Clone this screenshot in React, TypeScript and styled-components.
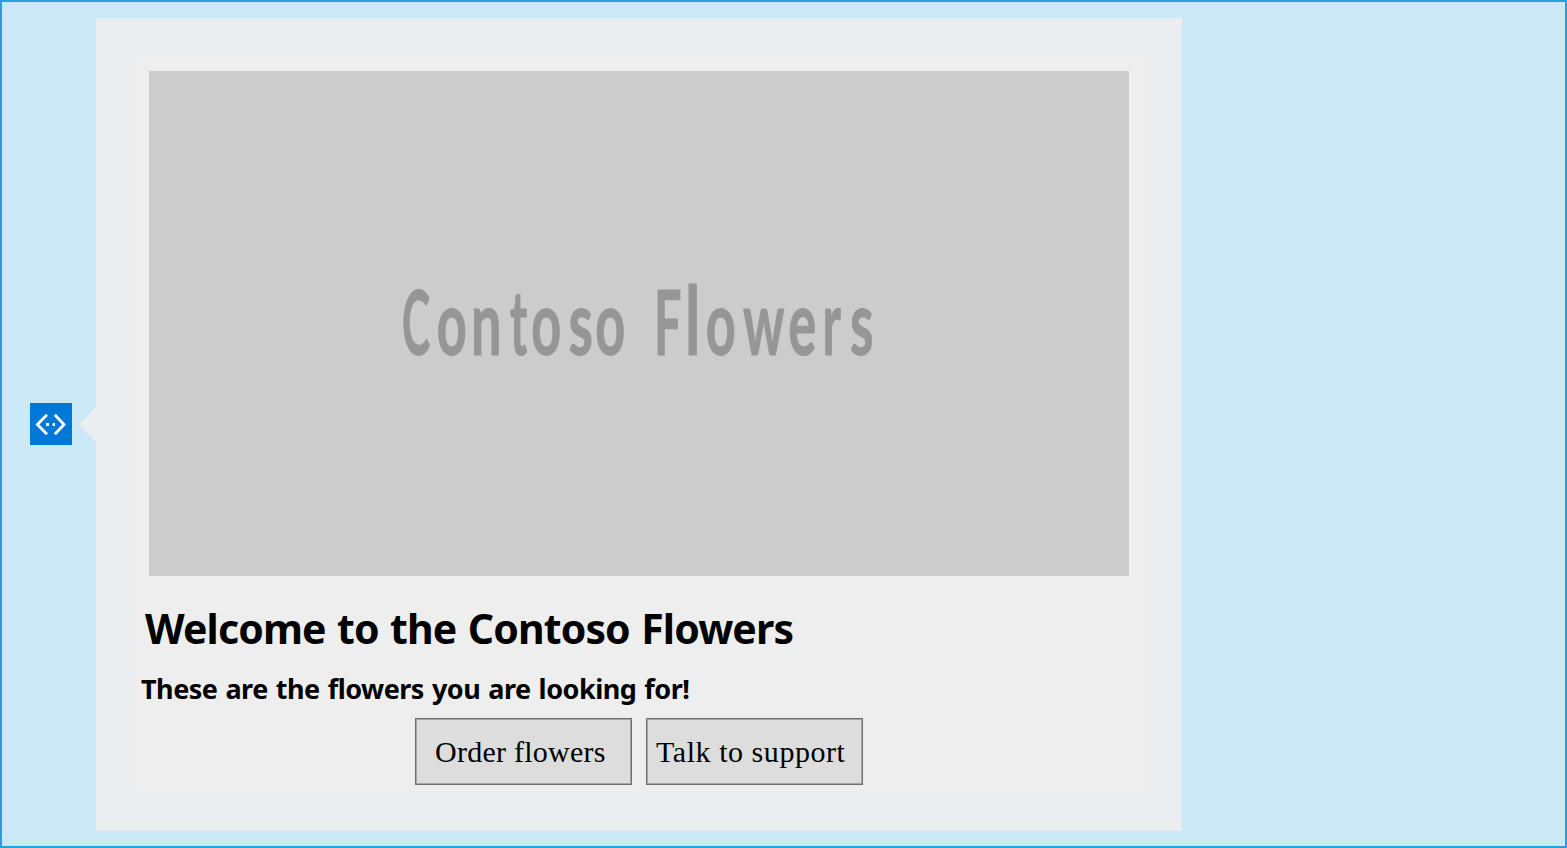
import React from 'react';
import styled, { createGlobalStyle } from 'styled-components';

const GlobalStyle = createGlobalStyle`
  * { box-sizing: border-box; }
  html, body { margin: 0; padding: 0; }
  body { overflow: hidden; }
`;

const Chat = styled.main`
  display: flex;
  width: 1567px;
  height: 848px;
  padding: 16px 0 0 28px;
  background: #cbe8f6;
  border: 2px solid #26a0da;
`;

const Avatar = styled.svg`
  flex: none;
  width: 42px;
  height: 42px;
  margin-top: 385px;
  background: #0078d7;
`;

const Pointer = styled.svg`
  flex: none;
  width: 17px;
  height: 36px;
  margin: 388px 0 0 7px;
  fill: #eaeef1;
`;

const Bubble = styled.section`
  flex: none;
  width: 1086px;
  height: 813px;
  padding: 39px 35px 38px 39px;
  background: #eaeef1;
`;

const Card = styled.article`
  height: 736px;
  padding: 14px 18px 0 14px;
  background: #eeeeee;
`;

const Hero = styled.svg`
  display: block;
  width: 980px;
  height: 505px;
  background: #cccccc;
`;

const HeroWord = styled.text`
  font-family: Lato, sans-serif;
  font-size: 89px;
  font-weight: 700;
  fill: #969696;
  stroke: #969696;
  stroke-width: 1px;
`;

const Title = styled.h1`
  margin: 23px 0 0 -4px;
  font: 700 41px/58px "Noto Sans", sans-serif;
  letter-spacing: -0.86px;
  word-spacing: 1.5px;
  white-space: nowrap;
  color: #000;
`;

const Subtitle = styled.h2`
  margin: 13px 0 0 -8px;
  font: 700 27px/38px "Noto Sans", sans-serif;
  letter-spacing: -0.5px;
  word-spacing: 1.5px;
  white-space: nowrap;
  color: #000;
`;

const Actions = styled.div`
  display: flex;
  gap: 14px;
  margin: 10px 0 0 266px;
`;

const Action = styled.button<{ $inset: number; $spacing: number }>`
  width: 217px;
  height: 67px;
  padding: 0 0 0 ${(p) => p.$inset}px;
  border: 1px solid #707070;
  box-shadow: inset 0 0 0 1px #a5a5a5;
  background: #dddddd;
  font: 400 30px "Liberation Serif", serif;
  letter-spacing: ${(p) => p.$spacing}px;
  text-align: left;
  white-space: nowrap;
  color: #000;
`;

type Glyph = { ch: string; x: number; width: number; size?: number };

const contoso: Glyph[] = [
  { ch: 'C', x: 253, width: 28.2 },
  { ch: 'o', x: 287.7, width: 30 },
  { ch: 'n', x: 322, width: 30.6 },
  { ch: 't', x: 361, width: 17.3 },
  { ch: 'o', x: 382.2, width: 30 },
  { ch: 's', x: 419.5, width: 24.4 },
  { ch: 'o', x: 446.2, width: 30 },
];

const flowers: Glyph[] = [
  { ch: 'F', x: 505, width: 27.5 },
  { ch: 'l', x: 536, width: 15.4, size: 95 },
  { ch: 'o', x: 556.7, width: 30 },
  { ch: 'w', x: 594, width: 41.5 },
  { ch: 'e', x: 639.2, width: 28 },
  { ch: 'r', x: 673.5, width: 18.5 },
  { ch: 's', x: 701, width: 23.5 },
];

function Lettering({ glyphs }: { glyphs: Glyph[] }) {
  return (
    <HeroWord y="284.3">
      {glyphs.map((g, i) => (
        <tspan key={i} x={g.x} fontSize={g.size} textLength={g.width} lengthAdjust="spacingAndGlyphs">
          {g.ch}
        </tspan>
      ))}
    </HeroWord>
  );
}

export default function App() {
  return (
    <>
      <GlobalStyle />
      <Chat>
        <Avatar viewBox="0 0 42 42" aria-label="Bot">
          <g fill="none" stroke="#fff" strokeWidth="2.8">
            <path d="M17 11.8 7.4 21.5l9.6 9.7M24.8 11.8l9.2 9.7-9.2 9.7" />
          </g>
          <path fill="#fff" d="M16 20h3v3h-3zM22.4 21l1-1h1.6v3h-1.6l-1-1z" />
        </Avatar>
        <Pointer viewBox="0 0 17 36">
          <path d="M17 1v35L0 18.4z" />
        </Pointer>
        <Bubble>
          <Card>
            <Hero viewBox="0 0 980 505" role="img">
              <Lettering glyphs={contoso} />
              <Lettering glyphs={flowers} />
            </Hero>
            <Title>Welcome to the Contoso Flowers</Title>
            <Subtitle>These are the flowers you are looking for!</Subtitle>
            <Actions>
              <Action $inset={19} $spacing={0.25}>Order flowers</Action>
              <Action $inset={9} $spacing={0.55}>Talk to support</Action>
            </Actions>
          </Card>
        </Bubble>
      </Chat>
    </>
  );
}
